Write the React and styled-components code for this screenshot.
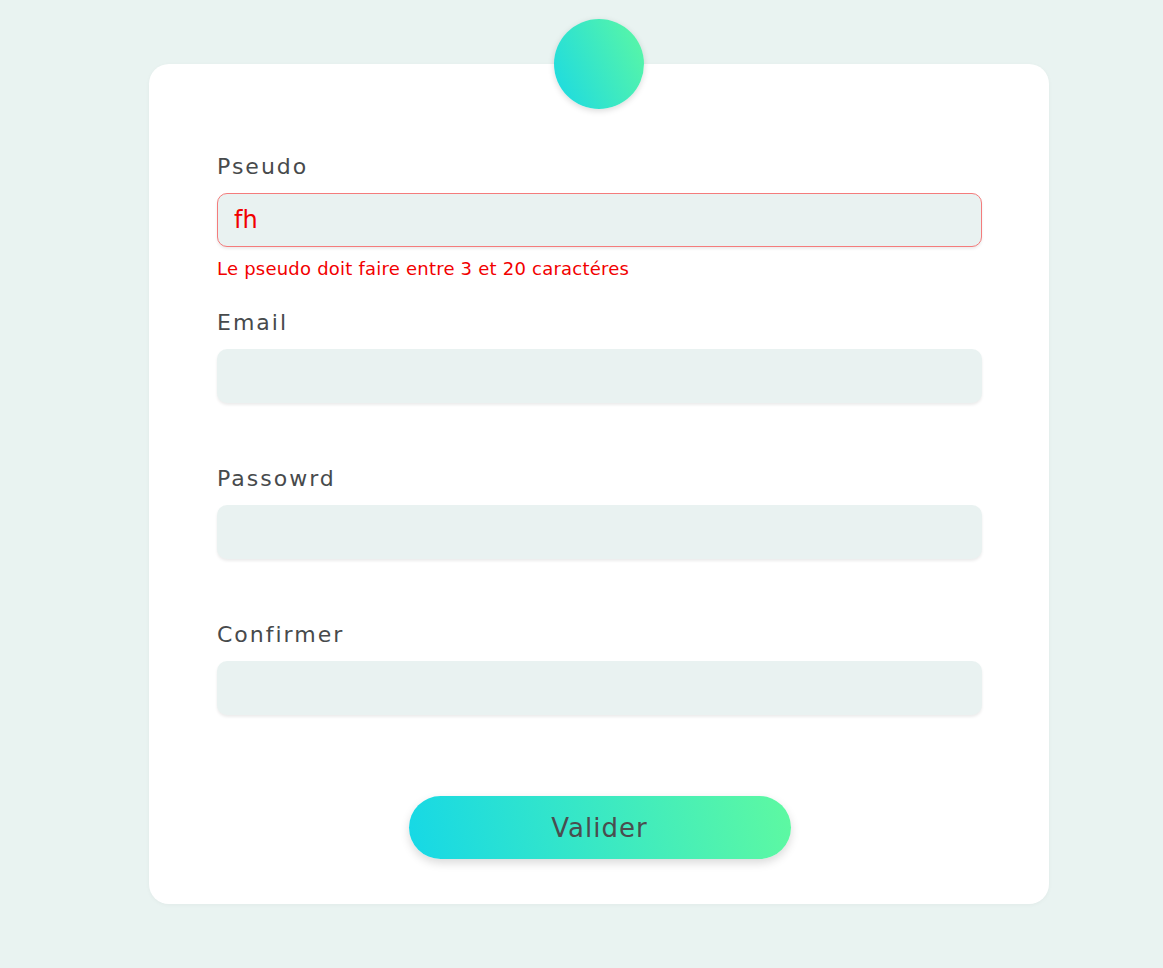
import React from "react";
import styled, { createGlobalStyle } from "styled-components";

const GlobalStyle = createGlobalStyle`
  * {
    box-sizing: border-box;
  }

  body {
    margin: 0;
    background-color: #e9f3f1;
    font-family: "DejaVu Sans", "Open Sans", sans-serif;
  }
`

const Page = styled.div`
  min-height: 100vh;
  padding: 64px 0 40px 149px;
`

const Card = styled.form`
  position: relative;
  width: 900px;
  padding: 90px 67px 45px 68px;
  background-color: #ffffff;
  border-radius: 20px;
  box-shadow: 0 1px 4px rgba(0, 0, 0, 0.04);
`

const Badge = styled.div`
  position: absolute;
  top: -45px;
  left: 405px;
  width: 90px;
  height: 90px;
  border-radius: 50%;
  background: linear-gradient(65deg, #1ad9e4, #5df8a2);
  box-shadow: 0 2px 6px rgba(0, 0, 0, 0.15);
`

const Field = styled.div`
  display: flex;
  flex-direction: column;
`

const Label = styled.label`
  color: #474a4c;
  font-size: 22px;
  line-height: 26px;
  letter-spacing: 2px;
  margin-bottom: 13px;
`

const Input = styled.input`
  width: 100%;
  height: 54px;
  padding: 0 16px;
  border: 1px solid ${(p) => (p.$error ? "#f47c7c" : "transparent")};
  border-radius: 10px;
  background-color: #e9f2f1;
  box-shadow: 0 2px 3px rgba(0, 0, 0, 0.08);
  color: ${(p) => (p.$error ? "#f20000" : "#4a4d4f")};
  font-family: inherit;
  font-size: 24px;
  outline: none;
`

const ErrorText = styled.div`
  min-height: 20px;
  margin: 12px 0 31px;
  color: #f20000;
  font-size: 18px;
  line-height: 20px;
  letter-spacing: 0.22px;
`

const Submit = styled.button`
  display: block;
  width: 382px;
  height: 63px;
  margin: 18px auto 0;
  border: none;
  border-radius: 32px;
  background: linear-gradient(78deg, #16d8e6, #5ef9a1);
  box-shadow: 0 4px 10px rgba(0, 0, 0, 0.15);
  color: #4a4d4f;
  font-family: inherit;
  font-size: 26px;
  letter-spacing: 1px;
  cursor: pointer;
`

const fields = [
  { label: "Pseudo", type: "text", value: "fh", error: "Le pseudo doit faire entre 3 et 20 caractéres" },
  { label: "Email", type: "email", value: "" },
  { label: "Passowrd", type: "password", value: "" },
  { label: "Confirmer", type: "password", value: "" },
]

const App = () => {
  return (
    <Page>
      <GlobalStyle />
      <Card onSubmit={(e) => e.preventDefault()}>
        <Badge />
        {fields.map((f) => (
          <Field key={f.label}>
            <Label>{f.label}</Label>
            <Input type={f.type} defaultValue={f.value} $error={!!f.error} />
            <ErrorText>{f.error}</ErrorText>
          </Field>
        ))}
        <Submit type="submit">Valider</Submit>
      </Card>
    </Page>
  )
}

export default App;
